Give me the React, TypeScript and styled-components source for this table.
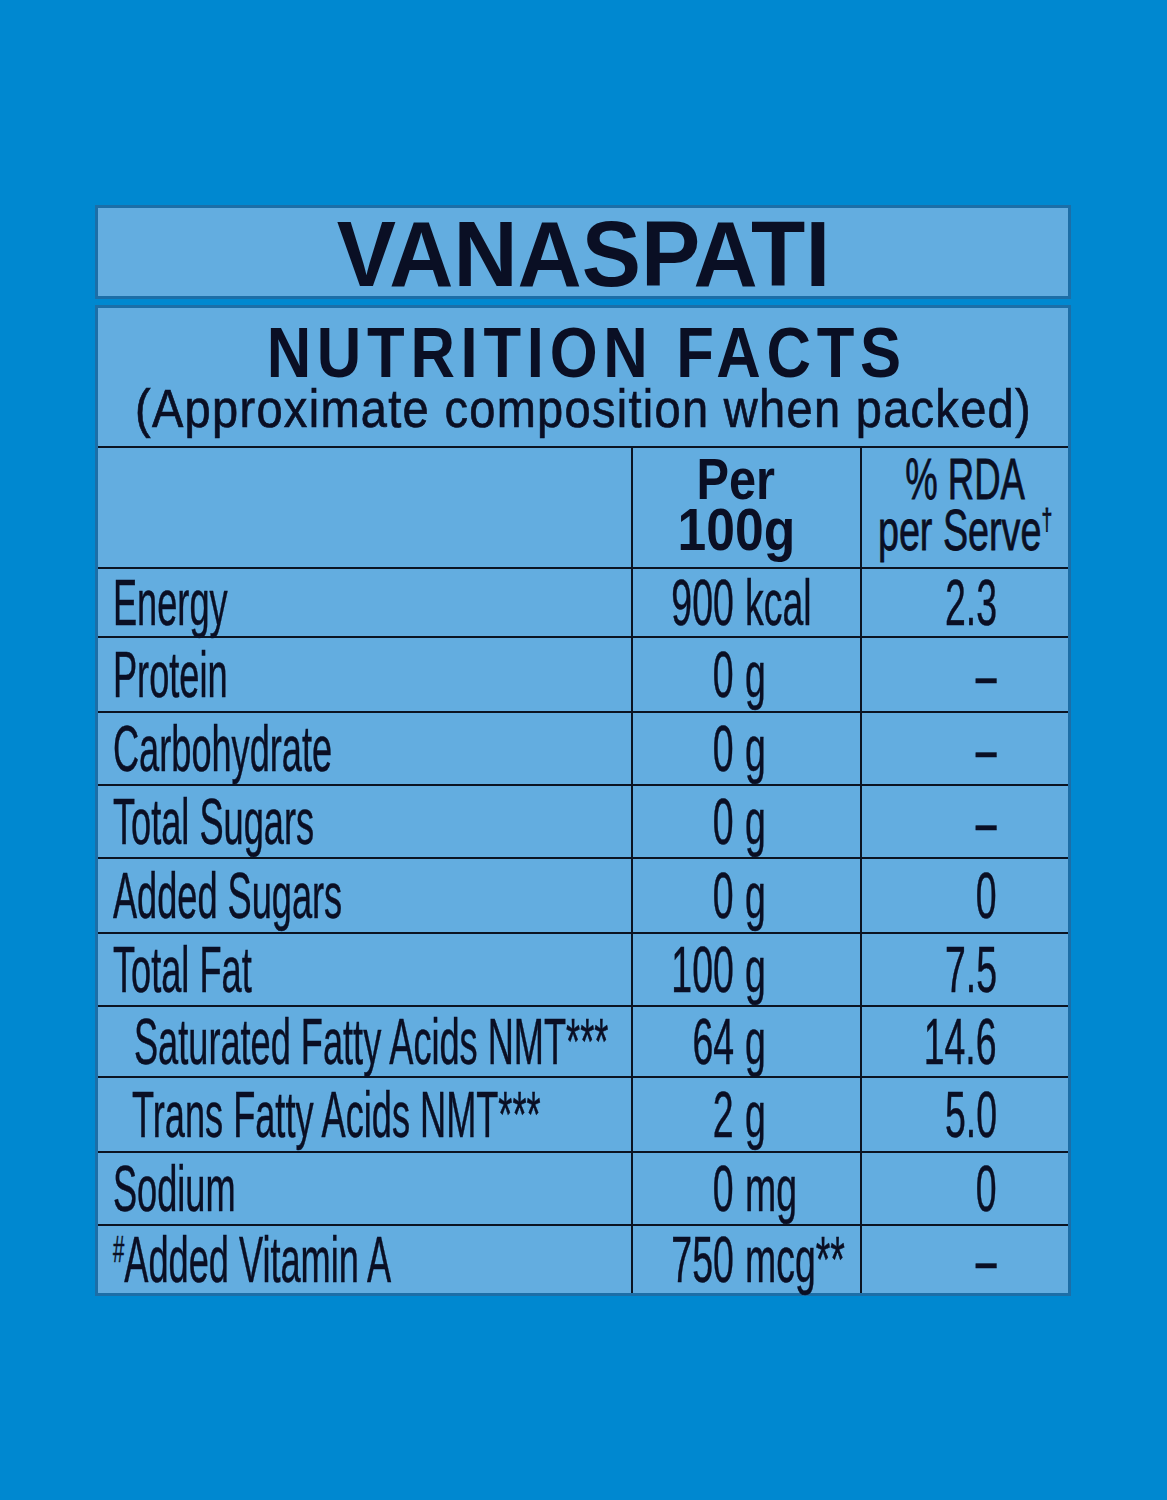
import React from "react";
import styled, { createGlobalStyle } from "styled-components";

const GlobalStyle = createGlobalStyle`
  html, body {
    margin: 0;
    padding: 0;
    background: #0088d0;
  }
  body {
    font-family: "Liberation Sans", Arial, sans-serif;
    color: #0a0f24;
  }
`;

const INK = "#0a0f24";
const PANEL = "#63ade0";
const EDGE = "#1c6ea7";
const LINE = "#0b1422";

const Page = styled.div`
  width: 1167px;
  height: 1500px;
  background: #0088d0;
  box-sizing: border-box;
  padding: 205px 0 0 95px;
`;

const Label = styled.div`
  width: 976px;
  display: flex;
  flex-direction: column;
  gap: 6px;
`;

const Panel = styled.section`
  background: ${PANEL};
  border: 3px solid ${EDGE};
  box-sizing: border-box;
`;

const TitleBox = styled(Panel)`
  height: 94px;
  display: flex;
  align-items: center;
  justify-content: center;
  padding-top: 4px;
`;

const Title = styled.h1`
  margin: 0;
  font-family: "Liberation Sans", Arial, sans-serif;
  font-weight: 700;
  font-size: 93px;
  line-height: 1;
  letter-spacing: 0;
  transform: scaleX(0.955);
  color: ${INK};
`;

const Heading = styled.div`
  height: 138px;
  box-sizing: border-box;
  padding-top: 14px;
  display: flex;
  flex-direction: column;
  align-items: center;
`;

const HeadTitle = styled.h2`
  margin: 0;
  font-weight: 700;
  font-size: 70px;
  line-height: 62px;
  letter-spacing: 6.5px;
  margin-right: -6.5px;
  white-space: nowrap;
  transform: scaleX(0.88);
  color: ${INK};
`;

const Sub = styled.div`
  font-size: 54px;
  line-height: 48px;
  letter-spacing: 1.5px;
  margin-right: -1.5px;
  white-space: nowrap;
  flex-shrink: 0;
  transform: scaleX(0.87);
  color: ${INK};
  -webkit-text-stroke: 0.7px ${INK};
`;

const Row = styled.div<{ $h: number }>`
  display: grid;
  grid-template-columns: 535px 229px 1fr;
  height: ${(p) => p.$h}px;
  border-top: 2px solid ${LINE};
  box-sizing: border-box;
`;

const Cell = styled.div<{ $last?: boolean }>`
  display: flex;
  align-items: center;
  min-width: 0;
  border-right: ${(p) => (p.$last ? "none" : `2px solid ${LINE}`)};
  font-size: 64px;
  line-height: 1;
  white-space: nowrap;
  color: ${INK};
  -webkit-text-stroke: 0.5px ${INK};
`;

const NameCell = styled(Cell)<{ $indent: number }>`
  padding-left: ${(p) => 15 + p.$indent}px;
`;

const AmountCell = styled(Cell)`
  display: grid;
  grid-template-columns: 101px 1fr;
  align-items: center;
`;

const RdaCell = styled(Cell)`
  justify-content: flex-end;
  padding-right: 71px;
`;

const HeadCell = styled(Cell)<{ $shift: number }>`
  flex-direction: column;
  justify-content: center;
  padding-right: ${(p) => p.$shift}px;
  padding-bottom: 8px;
  -webkit-text-stroke: 0;
`;

const Squeeze = styled.span<{ $scale: number; $origin: string }>`
  display: inline-block;
  transform: scaleX(${(p) => p.$scale});
  transform-origin: ${(p) => p.$origin} center;
`;

const Num = styled(Squeeze)`
  justify-self: end;
`;

const Unit = styled(Squeeze)`
  justify-self: start;
  margin-left: 11px;
`;

const HeadLine = styled(Squeeze)<{ $bold?: boolean; $size: number }>`
  font-weight: ${(p) => (p.$bold ? 700 : 400)};
  font-size: ${(p) => p.$size}px;
  line-height: 51px;
  -webkit-text-stroke: ${(p) => (p.$bold ? 0 : 0.8)}px ${INK};
`;

const Sup = styled.sup<{ $size: number; $rise: number }>`
  font-size: ${(p) => p.$size}px;
  vertical-align: ${(p) => p.$rise}px;
  line-height: 0;
`;

type Item = {
  label: string;
  indent?: number;
  hash?: boolean;
  num: string;
  unit: string;
  rda: string;
  h: number;
};

const rows: Item[] = [
  { label: "Energy", num: "900", unit: "kcal", rda: "2.3", h: 69 },
  { label: "Protein", num: "0", unit: "g", rda: "–", h: 75 },
  { label: "Carbohydrate", num: "0", unit: "g", rda: "–", h: 73 },
  { label: "Total Sugars", num: "0", unit: "g", rda: "–", h: 73 },
  { label: "Added Sugars", num: "0", unit: "g", rda: "0", h: 75 },
  { label: "Total Fat", num: "100", unit: "g", rda: "7.5", h: 73 },
  { label: "Saturated Fatty Acids NMT***", indent: 21, num: "64", unit: "g", rda: "14.6", h: 71 },
  { label: "Trans Fatty Acids NMT***", indent: 19, num: "2", unit: "g", rda: "5.0", h: 75 },
  { label: "Sodium", num: "0", unit: "mg", rda: "0", h: 73 },
  { label: "Added Vitamin A", hash: true, num: "750", unit: "mcg**", rda: "–", h: 69 },
];

const LABEL_SCALE = 0.565;
const VALUE_SCALE = 0.585;

export default function App() {
  return (
    <>
      <GlobalStyle />
      <Page>
        <Label>
          <TitleBox>
            <Title>VANASPATI</Title>
          </TitleBox>
          <Panel>
            <Heading>
              <HeadTitle>NUTRITION FACTS</HeadTitle>
              <Sub>(Approximate composition when packed)</Sub>
            </Heading>
            <Row $h={121}>
              <Cell />
              <HeadCell $shift={21}>
                <HeadLine $bold $size={58} $scale={0.84} $origin="center">
                  Per
                </HeadLine>
                <HeadLine $bold $size={60} $scale={0.86} $origin="center">
                  100g
                </HeadLine>
              </HeadCell>
              <HeadCell $last $shift={0}>
                <HeadLine $size={58} $scale={0.63} $origin="center">
                  % RDA
                </HeadLine>
                <HeadLine $size={58} $scale={0.65} $origin="center">
                  per Serve
                  <Sup $size={30} $rise={20}>
                    †
                  </Sup>
                </HeadLine>
              </HeadCell>
            </Row>
            {rows.map((r) => (
              <Row key={r.label} $h={r.h}>
                <NameCell $indent={r.indent ?? 0}>
                  <Squeeze $scale={LABEL_SCALE} $origin="left">
                    {r.hash && (
                      <Sup $size={36} $rise={20}>
                        #
                      </Sup>
                    )}
                    {r.label}
                  </Squeeze>
                </NameCell>
                <AmountCell>
                  <Num $scale={VALUE_SCALE} $origin="right">
                    {r.num}
                  </Num>
                  <Unit $scale={VALUE_SCALE} $origin="left">
                    {r.unit}
                  </Unit>
                </AmountCell>
                <RdaCell $last>
                  <Squeeze $scale={VALUE_SCALE} $origin="right">
                    {r.rda}
                  </Squeeze>
                </RdaCell>
              </Row>
            ))}
          </Panel>
        </Label>
      </Page>
    </>
  );
}
